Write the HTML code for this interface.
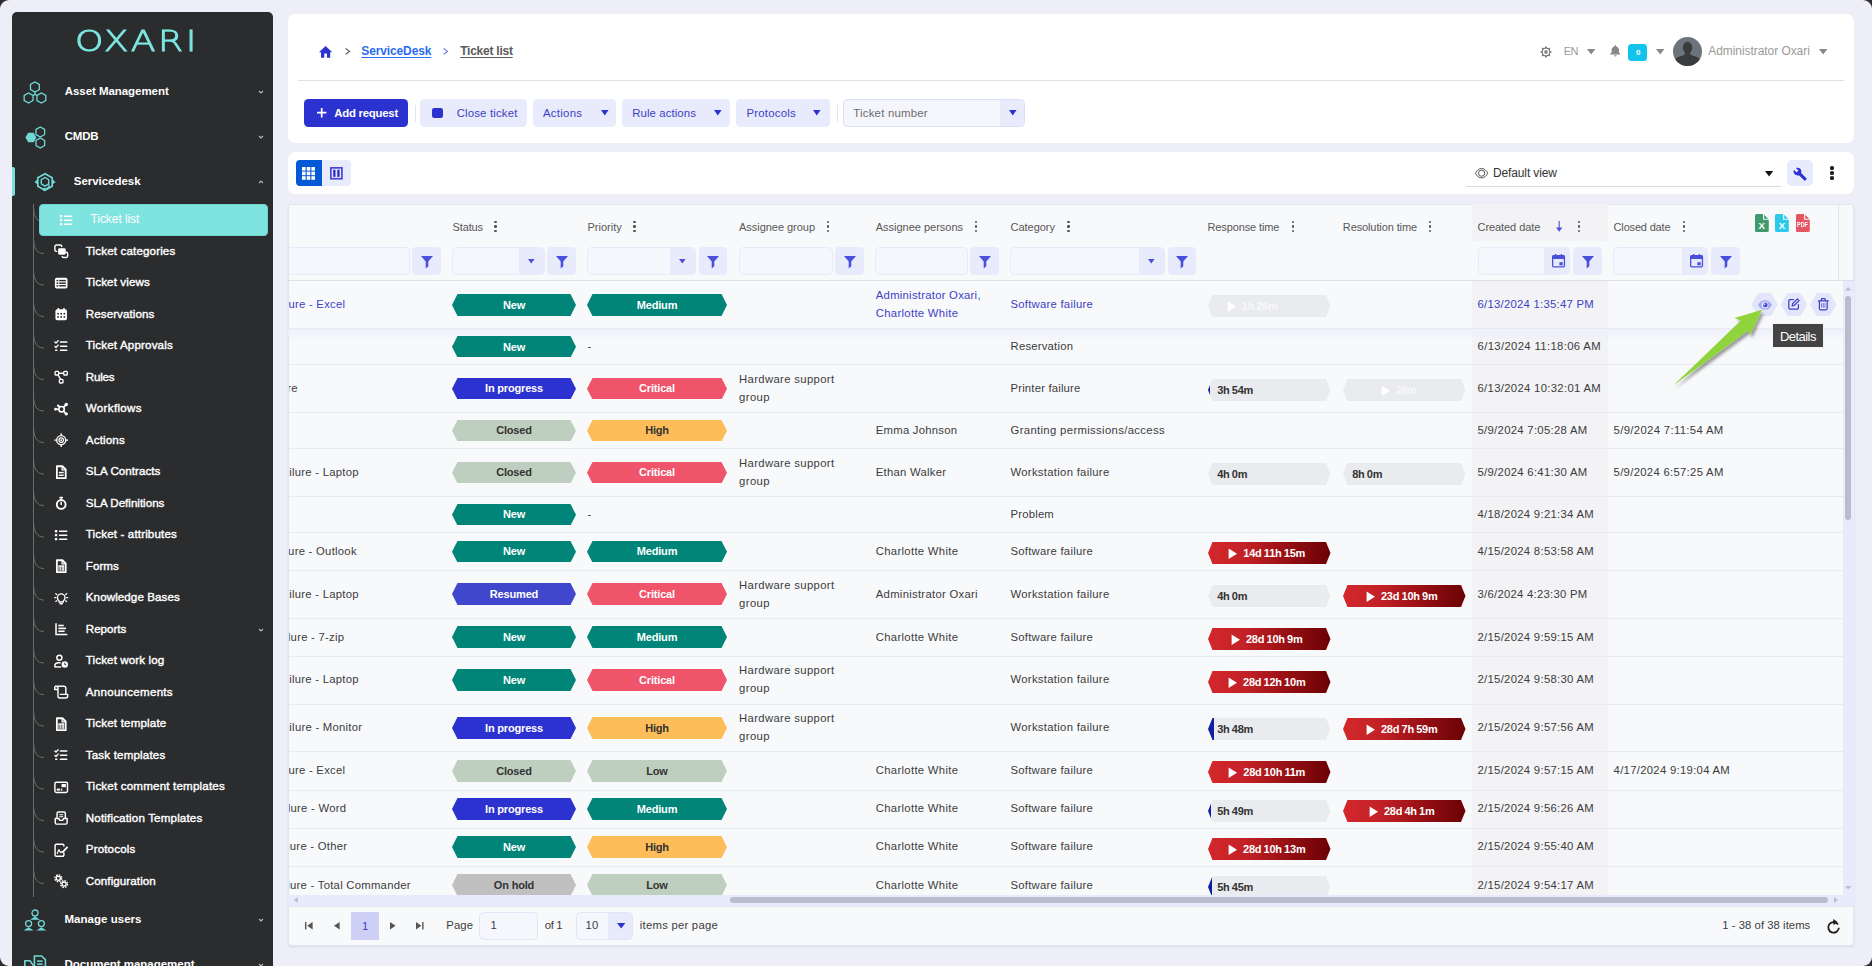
<!DOCTYPE html>
<html lang="en"><head><meta charset="utf-8"><title>Ticket list - OXARI ServiceDesk</title>
<style>
html,body{margin:0;padding:0;background:#2e2e2e;}
body{width:1872px;height:966px;overflow:hidden;font-family:"Liberation Sans",Arial,sans-serif;}
#app{position:relative;width:1872px;height:966px;overflow:hidden;background:#eeeef8;border-radius:9px;}
.a{position:absolute;box-sizing:border-box;}
.t{position:absolute;white-space:nowrap;margin:0;padding:0;}
svg{position:absolute;overflow:visible;}

.hx{position:absolute;clip-path:polygon(0 50%,5.5px 0,calc(100% - 5.5px) 0,100% 50%,calc(100% - 5.5px) 100%,5.5px 100%);text-align:center;font-weight:700;font-size:11px;letter-spacing:-.18px;white-space:nowrap;overflow:hidden;}
.hx4{letter-spacing:-.22px;word-spacing:-.6px;clip-path:polygon(0 50%,4.5px 0,calc(100% - 4.5px) 0,100% 50%,calc(100% - 4.5px) 100%,4.5px 100%);}
.hx b{position:absolute;left:0;right:0;top:0;bottom:0;font-weight:700;}
.ln{position:absolute;background:#e3e5ee;height:1px;}

</style></head><body><div id="app">
<div class="a" style="left:12.00px;top:12.00px;width:261.00px;height:960.00px;background:#2b2c2e;border-radius:5px 5px 0 0;"></div><span id="t1" class="t" style="top:22.90px;font-size:28.6px;line-height:36px;color:#7ce6e0;font-weight:200;left:75.00px;font-family:&quot;DejaVu Sans&quot;,&quot;DejaVu Sans Light&quot;,sans-serif;font-weight:200;-webkit-text-stroke:.85px #7ce6e0;letter-spacing:1.9px;transform:scaleX(1.268);transform-origin:0 50%;">OXARI</span><svg style="left:24.00px;top:80.50px;" width="22" height="22" viewBox="0 0 22 22"><g fill="none" stroke="#6fd8d4" stroke-width="1.3"><polygon points="15.32,8.55 10.90,11.10 6.48,8.55 6.48,3.45 10.90,0.90 15.32,3.45"/><polygon points="9.02,19.55 4.60,22.10 0.18,19.55 0.18,14.45 4.60,11.90 9.02,14.45"/><polygon points="21.82,19.55 17.40,22.10 12.98,19.55 12.98,14.45 17.40,11.90 21.82,14.45"/><path d="M10.9 11.1V13.4M10.9 13.4L9 14.5M10.9 13.4L13 14.5"/></g></svg><span id="t2" class="t" style="top:81.20px;font-size:11.5px;line-height:20px;color:#fff;font-weight:700;left:64.70px;letter-spacing:-0.051px;">Asset Management</span><svg style="left:258.50px;top:89.50px;" width="4" height="4" viewBox="0 0 4 4"><path d="M0 1L2 3L4 1" fill="none" stroke="#b8b8b8" stroke-width="1.1"/></svg><svg style="left:24.50px;top:125.50px;" width="22" height="22" viewBox="0 0 22 22"><polygon points="11.40,11.50 8.65,16.26 3.15,16.26 0.40,11.50 3.15,6.74 8.65,6.74" fill="#6fd8d4"/><g fill="none" stroke="#6fd8d4" stroke-width="1.3"><polygon points="19.63,8.50 15.30,11.00 10.97,8.50 10.97,3.50 15.30,1.00 19.63,3.50"/><polygon points="19.63,19.50 15.30,22.00 10.97,19.50 10.97,14.50 15.30,12.00 19.63,14.50"/></g></svg><span id="t3" class="t" style="top:126.20px;font-size:11.5px;line-height:20px;color:#fff;font-weight:700;left:64.70px;letter-spacing:-0.175px;">CMDB</span><svg style="left:258.50px;top:134.50px;" width="4" height="4" viewBox="0 0 4 4"><path d="M0 1L2 3L4 1" fill="none" stroke="#b8b8b8" stroke-width="1.1"/></svg><div class="a" style="left:12.00px;top:166.50px;width:3.20px;height:29.50px;background:#7be0dc;border-radius:0 2px 2px 0;"></div><svg style="left:33.50px;top:172.50px;" width="22" height="22" viewBox="0 0 22 22"><g fill="none" stroke="#6fd8d4"><polygon points="18.19,13.15 11.00,17.30 3.81,13.15 3.81,4.85 11.00,0.70 18.19,4.85" stroke-width="1.7"/><polygon points="14.72,10.95 11.00,13.10 7.28,10.95 7.28,6.65 11.00,4.50 14.72,6.65" stroke-width="1.4"/><path d="M15 11.6V14L11.6 16.2" stroke-width="1.4"/></g><g fill="#6fd8d4"><path d="M3.6 6.4V11.6L0.4 9Z"/><path d="M18.4 6.4V11.6L21.6 9Z"/><circle cx="10.4" cy="16.4" r="1.7"/></g></svg><span id="t4" class="t" style="top:171.20px;font-size:11.5px;line-height:20px;color:#fff;font-weight:700;left:73.80px;letter-spacing:-0.040px;">Servicedesk</span><svg style="left:258.50px;top:179.50px;" width="4" height="4" viewBox="0 0 4 4"><path d="M0 3L2 1L4 3" fill="none" stroke="#b8b8b8" stroke-width="1.1"/></svg><svg style="left:0.00px;top:0.00px;" width="280" height="966" viewBox="0 0 280 966"><g fill="none" stroke="#6c6c6c" stroke-width="1"><path d="M33.5 204V897"/><path d="M33.5 208.2Q34 222.1 44 222.1"/><path d="M33.5 239.8Q34 253.7 44 253.7"/><path d="M33.5 271.3Q34 285.2 44 285.2"/><path d="M33.5 302.8Q34 316.7 44 316.7"/><path d="M33.5 334.3Q34 348.2 44 348.2"/><path d="M33.5 365.8Q34 379.7 44 379.7"/><path d="M33.5 397.3Q34 411.2 44 411.2"/><path d="M33.5 428.8Q34 442.7 44 442.7"/><path d="M33.5 460.3Q34 474.2 44 474.2"/><path d="M33.5 491.8Q34 505.7 44 505.7"/><path d="M33.5 523.3Q34 537.2 44 537.2"/><path d="M33.5 554.8Q34 568.7 44 568.7"/><path d="M33.5 586.3Q34 600.2 44 600.2"/><path d="M33.5 617.8Q34 631.7 44 631.7"/><path d="M33.5 649.3Q34 663.2 44 663.2"/><path d="M33.5 680.8Q34 694.7 44 694.7"/><path d="M33.5 712.3Q34 726.2 44 726.2"/><path d="M33.5 743.8Q34 757.7 44 757.7"/><path d="M33.5 775.3Q34 789.2 44 789.2"/><path d="M33.5 806.8Q34 820.7 44 820.7"/><path d="M33.5 838.3Q34 852.2 44 852.2"/><path d="M33.5 869.8Q34 883.7 44 883.7"/></g></svg><div class="a" style="left:39.00px;top:203.70px;width:229.00px;height:32.50px;background:#7fe3e0;border-radius:4px;border:1px solid #6fd3cf;"></div><svg style="left:59.20px;top:213.30px;" width="14.4" height="14.4" viewBox="0 0 16 16"><g fill="#fff"><rect x="1" y="2.3" width="2.6" height="2.6" rx=".6"/><rect x="1" y="6.7" width="2.6" height="2.6" rx=".6"/><rect x="1" y="11.1" width="2.6" height="2.6" rx=".6"/><rect x="5.4" y="2.8" width="9.6" height="1.7" rx=".8"/><rect x="5.4" y="7.2" width="9.6" height="1.7" rx=".8"/><rect x="5.4" y="11.6" width="9.6" height="1.7" rx=".8"/></g></svg><span id="t5" class="t" style="top:209.10px;font-size:12px;line-height:20px;color:#fff;left:90.50px;letter-spacing:-0.069px;">Ticket list</span><svg style="left:54.30px;top:244.10px;" width="14.4" height="14.4" viewBox="0 0 16 16"><g fill="none" stroke="#fff" stroke-width="1.6"><path d="M3.6 8.2H2.6A1.6 1.6 0 0 1 1 6.6V2.8A1.6 1.6 0 0 1 2.6 1.2H7A1.6 1.6 0 0 1 8.6 2.8V3.4"/><path d="M12.6 9.2H13.6A1.6 1.6 0 0 1 15.2 10.8V13.4A1.6 1.6 0 0 1 13.6 15H10.6A1.6 1.6 0 0 1 9 13.4"/></g><rect x="4.6" y="4.6" width="8.4" height="7.4" rx="1.6" fill="#fff"/></svg><span id="t6" class="t" style="top:241.00px;font-size:11.6px;line-height:20px;color:#fff;left:85.80px;letter-spacing:0.141px;-webkit-text-stroke:.38px #fff;">Ticket categories</span><svg style="left:54.30px;top:275.60px;" width="14.4" height="14.4" viewBox="0 0 16 16"><rect x="1" y="2" width="14" height="12" rx="2" fill="#fff"/><g fill="#2b2c2e"><rect x="2.8" y="4.3" width="2" height="1.6"/><rect x="2.8" y="7.2" width="2" height="1.6"/><rect x="2.8" y="10.1" width="2" height="1.6"/><rect x="5.8" y="4.3" width="7.4" height="1.6"/><rect x="5.8" y="7.2" width="7.4" height="1.6"/><rect x="5.8" y="10.1" width="7.4" height="1.6"/></g></svg><span id="t7" class="t" style="top:272.00px;font-size:11.6px;line-height:20px;color:#fff;left:85.80px;letter-spacing:0.116px;-webkit-text-stroke:.38px #fff;">Ticket views</span><svg style="left:54.30px;top:307.10px;" width="14.4" height="14.4" viewBox="0 0 16 16"><rect x="1.6" y="2.6" width="12.8" height="12.2" rx="2" fill="#fff"/><rect x="4" y="1" width="1.8" height="3.4" rx=".8" fill="#fff"/><rect x="10.2" y="1" width="1.8" height="3.4" rx=".8" fill="#fff"/><g fill="#2b2c2e"><rect x="3.6" y="6.6" width="1.8" height="1.8"/><rect x="7.1" y="6.6" width="1.8" height="1.8"/><rect x="10.6" y="6.6" width="1.8" height="1.8"/><rect x="3.6" y="10.2" width="1.8" height="1.8"/><rect x="7.1" y="10.2" width="1.8" height="1.8"/><rect x="10.6" y="10.2" width="1.8" height="1.8"/></g></svg><span id="t8" class="t" style="top:304.00px;font-size:11.6px;line-height:20px;color:#fff;left:85.80px;letter-spacing:0.077px;-webkit-text-stroke:.38px #fff;">Reservations</span><svg style="left:54.30px;top:338.60px;" width="14.4" height="14.4" viewBox="0 0 16 16"><g fill="none" stroke="#fff" stroke-width="1.5" stroke-linecap="round" stroke-linejoin="round"><path d="M1 3.4l1.2 1.2L4.6 2"/><path d="M1 8.2l1.2 1.2L4.6 6.8"/></g><g fill="#fff"><rect x="1.2" y="11.6" width="2.6" height="1.8" rx=".6"/><rect x="6.4" y="2.6" width="8.6" height="1.7" rx=".8"/><rect x="6.4" y="7.2" width="8.6" height="1.7" rx=".8"/><rect x="6.4" y="11.7" width="8.6" height="1.7" rx=".8"/></g></svg><span id="t9" class="t" style="top:335.00px;font-size:11.6px;line-height:20px;color:#fff;left:85.80px;letter-spacing:0.154px;-webkit-text-stroke:.38px #fff;">Ticket Approvals</span><svg style="left:54.30px;top:370.10px;" width="14.4" height="14.4" viewBox="0 0 16 16"><g fill="none" stroke="#fff" stroke-width="1.5"><rect x="1.2" y="1.6" width="4" height="4" rx="1"/><rect x="10.8" y="1.6" width="4" height="4" rx="1"/><rect x="6" y="10.4" width="4" height="4" rx="1"/><path d="M5.2 3.6H10.8M4.4 5.4L7.4 10.4"/></g></svg><span id="t10" class="t" style="top:367.00px;font-size:11.6px;line-height:20px;color:#fff;left:85.80px;letter-spacing:-0.211px;-webkit-text-stroke:.38px #fff;">Rules</span><svg style="left:54.30px;top:401.60px;" width="14.4" height="14.4" viewBox="0 0 16 16"><g fill="none" stroke="#fff" stroke-width="1.8"><circle cx="8.4" cy="8" r="3"/><path d="M10.4 6L13 3.4M10.4 10L13 12.6M5.4 8H2.6M6.4 5.8L5 4.4"/></g><g fill="#fff"><circle cx="13.6" cy="2.8" r="1.9"/><circle cx="13.6" cy="13.2" r="1.9"/><circle cx="1.8" cy="8" r="1.6"/><circle cx="4.6" cy="4" r="1.3"/></g></svg><span id="t11" class="t" style="top:398.00px;font-size:11.6px;line-height:20px;color:#fff;left:85.80px;letter-spacing:0.315px;-webkit-text-stroke:.38px #fff;">Workflows</span><svg style="left:54.30px;top:433.10px;" width="14.4" height="14.4" viewBox="0 0 16 16"><g fill="none" stroke="#fff" stroke-width="1.5"><circle cx="8" cy="8" r="5"/><circle cx="8" cy="8" r="2.5" stroke-width="1.3"/><path d="M8 .4V3M8 13V15.6M.4 8H3M13 8H15.6"/></g><circle cx="8" cy="8" r="1" fill="#fff"/></svg><span id="t12" class="t" style="top:430.00px;font-size:11.6px;line-height:20px;color:#fff;left:85.80px;letter-spacing:0.153px;-webkit-text-stroke:.38px #fff;">Actions</span><svg style="left:54.30px;top:464.60px;" width="14.4" height="14.4" viewBox="0 0 16 16"><path d="M3.2 1.4H9.4L13 5V14.6H3.2Z" fill="none" stroke="#fff" stroke-width="2" stroke-linejoin="round"/><path d="M9 1.4V5.4H13" fill="none" stroke="#fff" stroke-width="1.4"/><g fill="#fff"><rect x="5.4" y="7.6" width="5.4" height="1.6"/><rect x="5.4" y="10.6" width="5.4" height="1.6"/></g></svg><span id="t13" class="t" style="top:461.00px;font-size:11.6px;line-height:20px;color:#fff;left:85.80px;letter-spacing:0.038px;-webkit-text-stroke:.38px #fff;">SLA Contracts</span><svg style="left:54.30px;top:496.10px;" width="14.4" height="14.4" viewBox="0 0 16 16"><circle cx="8" cy="9.4" r="4.9" fill="none" stroke="#fff" stroke-width="2.1"/><g fill="#fff"><rect x="6" y=".8" width="4" height="1.7" rx=".6"/><rect x="7.2" y="2" width="1.6" height="2.4"/><rect x="7.2" y="6.4" width="1.6" height="3.6" rx=".6"/></g></svg><span id="t14" class="t" style="top:493.00px;font-size:11.6px;line-height:20px;color:#fff;left:85.80px;letter-spacing:-0.003px;-webkit-text-stroke:.38px #fff;">SLA Definitions</span><svg style="left:54.30px;top:527.60px;" width="14.4" height="14.4" viewBox="0 0 16 16"><g fill="#fff"><rect x="1" y="2.3" width="2.6" height="2.6" rx=".6"/><rect x="1" y="6.7" width="2.6" height="2.6" rx=".6"/><rect x="1" y="11.1" width="2.6" height="2.6" rx=".6"/><rect x="5.4" y="2.8" width="9.6" height="1.7" rx=".8"/><rect x="5.4" y="7.2" width="9.6" height="1.7" rx=".8"/><rect x="5.4" y="11.6" width="9.6" height="1.7" rx=".8"/></g></svg><span id="t15" class="t" style="top:524.00px;font-size:11.6px;line-height:20px;color:#fff;left:85.80px;letter-spacing:0.138px;-webkit-text-stroke:.38px #fff;">Ticket - attributes</span><svg style="left:54.30px;top:559.10px;" width="14.4" height="14.4" viewBox="0 0 16 16"><path d="M3.2 1.4H9.4L13 5V14.6H3.2Z" fill="none" stroke="#fff" stroke-width="2" stroke-linejoin="round"/><path d="M9 1.4V5.4H13" fill="none" stroke="#fff" stroke-width="1.4"/><g fill="#fff"><rect x="5" y="7.2" width="6.2" height="1.3"/><rect x="5" y="7.2" width="1.1" height="6"/><rect x="6.9" y="7.2" width="1.1" height="6"/><rect x="8.6" y="7.2" width="1.1" height="6"/><rect x="10.2" y="7.2" width="1.1" height="6"/></g></svg><span id="t16" class="t" style="top:556.00px;font-size:11.6px;line-height:20px;color:#fff;left:85.80px;letter-spacing:0.048px;-webkit-text-stroke:.38px #fff;">Forms</span><svg style="left:54.30px;top:590.60px;" width="14.4" height="14.4" viewBox="0 0 16 16"><g fill="none" stroke="#fff" stroke-width="1.5" stroke-linecap="round"><path d="M5.6 10.8C4.4 10 3.8 8.8 3.8 7.4A4.2 4.2 0 0 1 12.2 7.4C12.2 8.8 11.6 10 10.4 10.8V12.2H5.6Z" stroke-linejoin="round"/><path d="M.8 7.4H2M14 7.4H15.2M2 3L3 3.8M14 3L13 3.8M2 11.6L3 10.9M14 11.6L13 10.9"/></g><rect x="6" y="13.4" width="4" height="1.7" rx=".8" fill="#fff"/></svg><span id="t17" class="t" style="top:587.00px;font-size:11.6px;line-height:20px;color:#fff;left:85.80px;letter-spacing:0.086px;-webkit-text-stroke:.38px #fff;">Knowledge Bases</span><svg style="left:54.30px;top:622.10px;" width="14.4" height="14.4" viewBox="0 0 16 16"><g fill="#fff"><path d="M1.4 1.4H3.1V13H14.8V14.7H1.4Z"/><rect x="4.8" y="3" width="6" height="1.8"/><rect x="4.8" y="6.2" width="8.6" height="1.8"/><rect x="4.8" y="9.4" width="7" height="1.8"/></g></svg><span id="t18" class="t" style="top:619.00px;font-size:11.6px;line-height:20px;color:#fff;left:85.80px;letter-spacing:-0.001px;-webkit-text-stroke:.38px #fff;">Reports</span><svg style="left:258.50px;top:627.80px;" width="4" height="4" viewBox="0 0 4 4"><path d="M0 1L2 3L4 1" fill="none" stroke="#b8b8b8" stroke-width="1.1"/></svg><svg style="left:54.30px;top:653.60px;" width="14.4" height="14.4" viewBox="0 0 16 16"><g fill="none" stroke="#fff" stroke-width="1.6"><circle cx="6" cy="4.2" r="2.8"/><path d="M.9 14.6V13.4C.9 11.2 2.8 9.8 5 9.8H7.4"/><path d="M.9 14.4H8"/></g><circle cx="12" cy="11.6" r="3.6" fill="#fff"/><path d="M12 9.6V11.8H13.6" fill="none" stroke="#2b2c2e" stroke-width="1"/></svg><span id="t19" class="t" style="top:650.00px;font-size:11.6px;line-height:20px;color:#fff;left:85.80px;letter-spacing:0.114px;-webkit-text-stroke:.38px #fff;">Ticket work log</span><svg style="left:54.30px;top:685.10px;" width="14.4" height="14.4" viewBox="0 0 16 16"><g fill="none" stroke="#fff" stroke-width="1.6" stroke-linejoin="round"><path d="M4.4 10.4V3.6A2.2 2.2 0 0 0 2.2 1.4H11A2.2 2.2 0 0 1 13.2 3.6V10"/><path d="M2.2 1.4A1.6 1.6 0 0 0 .8 3.2V5H4.2"/><path d="M6.4 10.4H15.2V12.2A2.2 2.2 0 0 1 13 14.4H6.6A2.2 2.2 0 0 1 4.4 12.2V10.4"/></g></svg><span id="t20" class="t" style="top:682.00px;font-size:11.6px;line-height:20px;color:#fff;left:85.80px;letter-spacing:0.254px;-webkit-text-stroke:.38px #fff;">Announcements</span><svg style="left:54.30px;top:716.60px;" width="14.4" height="14.4" viewBox="0 0 16 16"><path d="M3.2 1.4H9.4L13 5V14.6H3.2Z" fill="none" stroke="#fff" stroke-width="2" stroke-linejoin="round"/><path d="M9 1.4V5.4H13" fill="none" stroke="#fff" stroke-width="1.4"/><g fill="#fff"><rect x="5" y="7.2" width="6.2" height="1.3"/><rect x="5" y="7.2" width="1.1" height="6"/><rect x="6.9" y="7.2" width="1.1" height="6"/><rect x="8.6" y="7.2" width="1.1" height="6"/><rect x="10.2" y="7.2" width="1.1" height="6"/></g></svg><span id="t21" class="t" style="top:713.00px;font-size:11.6px;line-height:20px;color:#fff;left:85.80px;letter-spacing:0.161px;-webkit-text-stroke:.38px #fff;">Ticket template</span><svg style="left:54.30px;top:748.10px;" width="14.4" height="14.4" viewBox="0 0 16 16"><g fill="none" stroke="#fff" stroke-width="1.5" stroke-linecap="round" stroke-linejoin="round"><path d="M1 3.4l1.2 1.2L4.6 2"/><path d="M1 8.2l1.2 1.2L4.6 6.8"/></g><g fill="#fff"><rect x="1.2" y="11.6" width="2.6" height="1.8" rx=".6"/><rect x="6.4" y="2.6" width="8.6" height="1.7" rx=".8"/><rect x="6.4" y="7.2" width="8.6" height="1.7" rx=".8"/><rect x="6.4" y="11.7" width="8.6" height="1.7" rx=".8"/></g></svg><span id="t22" class="t" style="top:745.00px;font-size:11.6px;line-height:20px;color:#fff;left:85.80px;letter-spacing:0.162px;-webkit-text-stroke:.38px #fff;">Task templates</span><svg style="left:54.30px;top:779.60px;" width="14.4" height="14.4" viewBox="0 0 16 16"><rect x="1" y="2.4" width="14" height="11.4" rx="1.6" fill="none" stroke="#fff" stroke-width="1.6"/><g fill="#fff"><rect x="8.4" y="4.4" width="4.8" height="3.6"/><rect x="3" y="9.6" width="3.6" height="2.2"/><rect x="7.6" y="9.6" width="1.6" height="2.2"/></g></svg><span id="t23" class="t" style="top:776.00px;font-size:11.6px;line-height:20px;color:#fff;left:85.80px;letter-spacing:0.176px;-webkit-text-stroke:.38px #fff;">Ticket comment templates</span><svg style="left:54.30px;top:811.10px;" width="14.4" height="14.4" viewBox="0 0 16 16"><g fill="none" stroke="#fff" stroke-width="1.6" stroke-linejoin="round"><path d="M3.4 8.2V2.6A1.4 1.4 0 0 1 4.8 1.2H11.2A1.4 1.4 0 0 1 12.6 2.6V8.2"/><path d="M1.4 8.4H5.4L6.4 10.4H9.6L10.6 8.4H14.6V13.2A1.4 1.4 0 0 1 13.2 14.6H2.8A1.4 1.4 0 0 1 1.4 13.2Z"/><path d="M5.8 4.2H10.2M5.8 6.4H10.2" stroke-width="1.2"/></g></svg><span id="t24" class="t" style="top:808.00px;font-size:11.6px;line-height:20px;color:#fff;left:85.80px;letter-spacing:0.154px;-webkit-text-stroke:.38px #fff;">Notification Templates</span><svg style="left:54.30px;top:842.60px;" width="14.4" height="14.4" viewBox="0 0 16 16"><g fill="none" stroke="#fff" stroke-width="1.6" stroke-linejoin="round" stroke-linecap="round"><path d="M11 11V13.4A1.4 1.4 0 0 1 9.6 14.8H2.6A1.4 1.4 0 0 1 1.2 13.4V2.8A1.4 1.4 0 0 1 2.6 1.4H9.6A1.4 1.4 0 0 1 11 2.8V3.4"/><path d="M3.6 11.6L5.4 7.4L7.2 10.6L9 9.4" stroke-width="1.3"/></g><path d="M14.4 3.6L15.8 5L10.4 10.8L8.4 11.4L9 9.4Z" fill="#fff"/></svg><span id="t25" class="t" style="top:839.00px;font-size:11.6px;line-height:20px;color:#fff;left:85.80px;letter-spacing:0.141px;-webkit-text-stroke:.38px #fff;">Protocols</span><svg style="left:54.30px;top:874.10px;" width="14.4" height="14.4" viewBox="0 0 16 16"><g fill="none" stroke="#fff"><circle cx="4.8" cy="4.8" r="2.3" stroke-width="1.5"/><circle cx="4.8" cy="4.8" r="3.8" stroke-width="1.5" stroke-dasharray="1.7 1.28"/><circle cx="11.2" cy="11.2" r="2.3" stroke-width="1.5"/><circle cx="11.2" cy="11.2" r="3.8" stroke-width="1.5" stroke-dasharray="1.7 1.28"/></g></svg><span id="t26" class="t" style="top:871.00px;font-size:11.6px;line-height:20px;color:#fff;left:85.80px;letter-spacing:0.087px;-webkit-text-stroke:.38px #fff;">Configuration</span><svg style="left:24.00px;top:909.00px;" width="22" height="22" viewBox="0 0 22 22"><g fill="none" stroke="#6fd8d4" stroke-width="1.3"><circle cx="11" cy="4" r="3"/><circle cx="4.6" cy="14.6" r="3"/><circle cx="17.4" cy="14.6" r="3"/></g><g fill="#6fd8d4"><path d="M6 10.8L11 7.6L16 10.8Z"/><path d="M-.4 21.6L4.6 18.2L9.6 21.6Z"/><path d="M12.4 21.6L17.4 18.2L22.4 21.6Z"/></g></svg><span id="t27" class="t" style="top:909.20px;font-size:11.5px;line-height:20px;color:#fff;font-weight:700;left:64.50px;letter-spacing:0.025px;">Manage users</span><svg style="left:258.50px;top:917.50px;" width="4" height="4" viewBox="0 0 4 4"><path d="M0 1L2 3L4 1" fill="none" stroke="#b8b8b8" stroke-width="1.1"/></svg><svg style="left:24.00px;top:954.50px;" width="22" height="22" viewBox="0 0 22 22"><g fill="none" stroke="#6fd8d4" stroke-width="1.6" stroke-linejoin="round"><path d="M10.4 12V1H17.6L21.4 4.6V22H10.4"/><path d="M.8 22V5.8H6L10 11.4V22"/></g><g fill="#6fd8d4"><rect x="13" y="5.4" width="5.6" height="1.5"/><rect x="13" y="8.4" width="5.6" height="1.5"/></g></svg><span id="t28" class="t" style="top:954.20px;font-size:11.5px;line-height:20px;color:#fff;font-weight:700;left:64.50px;letter-spacing:-0.019px;">Document management</span><svg style="left:258.50px;top:962.50px;" width="4" height="4" viewBox="0 0 4 4"><path d="M0 1L2 3L4 1" fill="none" stroke="#b8b8b8" stroke-width="1.1"/></svg><div class="a" style="left:288.00px;top:14.00px;width:1566.00px;height:128.50px;background:#fff;border-radius:7px;"></div><svg style="left:318.70px;top:45.90px;" width="13.2" height="11.8" viewBox="0 0 13.2 11.8"><path d="M5.3 11.8V7.6H7.9V11.8H11.2V6.2H13.2L6.6 0L0 6.2H2V11.8Z" fill="#2b32d0"/></svg><svg style="left:344.70px;top:48.20px;" width="5.4" height="6.8" viewBox="0 0 5.4 6.8"><path d="M.6 .5L4.6 3.4L.6 6.3" fill="none" stroke="#555" stroke-width="1.05"/></svg><span id="t29" class="t" style="top:41.00px;font-size:12px;line-height:20px;color:#2a6cf2;font-weight:700;left:361.30px;letter-spacing:-0.126px;text-decoration:underline;text-underline-offset:1.5px;">ServiceDesk</span><svg style="left:443.20px;top:48.20px;" width="5.4" height="6.8" viewBox="0 0 5.4 6.8"><path d="M.6 .5L4.6 3.4L.6 6.3" fill="none" stroke="#6a74e6" stroke-width="1.05"/></svg><span id="t30" class="t" style="top:41.00px;font-size:12px;line-height:20px;color:#5a5a5a;font-weight:700;left:460.20px;letter-spacing:-0.240px;text-decoration:underline;text-underline-offset:1.5px;">Ticket list</span><div class="a" style="left:298.00px;top:80.00px;width:1546.00px;height:1.00px;background:#dfe1ea;"></div><svg style="left:1540.00px;top:45.60px;" width="12" height="12" viewBox="0 0 12 12"><polygon points="6.00,0.05 7.61,2.12 10.21,1.79 9.88,4.39 11.95,6.00 9.88,7.61 10.21,10.21 7.61,9.88 6.00,11.95 4.39,9.88 1.79,10.21 2.12,7.61 0.05,6.00 2.12,4.39 1.79,1.79 4.39,2.12" fill="#7b7b7b"/><circle cx="6" cy="6" r="3.2" fill="#fff"/><circle cx="6" cy="6" r="1.9" fill="#8a8a8a"/></svg><span id="t31" class="t" style="top:40.50px;font-size:11px;line-height:20px;color:#9a9a9a;left:1563.70px;letter-spacing:-0.441px;">EN</span><svg style="left:1587.00px;top:49.20px;" width="8.4" height="5.6" viewBox="0 0 8.4 5.6"><path d="M0 0H8.4L4.2 5.6Z" fill="#888"/></svg><svg style="left:1609.80px;top:45.10px;" width="10.6" height="11.8" viewBox="0 0 11.4 12"><path d="M5.7 0C6.3 0 6.7 .4 6.7 1V1.3C8.6 1.8 9.7 3.4 9.7 5.4V7.6L11.2 9.4V10H.2V9.4L1.7 7.6V5.4C1.7 3.4 2.8 1.8 4.7 1.3V1C4.7 .4 5.1 0 5.7 0ZM4.4 10.7H7A1.3 1.3 0 0 1 4.4 10.7Z" fill="#888"/></svg><div class="a" style="left:1628.00px;top:44.00px;width:19.00px;height:17.00px;background:#12c4ec;border-radius:3.5px;"></div><span id="t32" class="t" style="top:43.00px;font-size:8px;line-height:20px;color:#fff;font-weight:700;left:1636.10px;">0</span><svg style="left:1656.00px;top:49.20px;" width="8.4" height="5.6" viewBox="0 0 8.4 5.6"><path d="M0 0H8.4L4.2 5.6Z" fill="#888"/></svg><div class="a" style="left:1672.80px;top:36.80px;width:29.30px;height:29.30px;background:#6b737c;border-radius:15px;overflow:hidden;"><svg style="left:0.00px;top:0.00px;" width="29.3" height="29.3" viewBox="0 0 29.3 29.3"><g fill="#3a3b3c"><ellipse cx="14.6" cy="10.6" rx="4.7" ry="5.9"/><path d="M11.8 14H17.4V17.8C20.8 19 25 20 26.6 21.8V30H2.6V21.8C4.2 20 8.4 19 11.8 17.8Z"/></g></svg></div><span id="t33" class="t" style="top:41.20px;font-size:12px;line-height:20px;color:#9a9a9a;left:1708.20px;letter-spacing:-0.058px;">Administrator Oxari</span><svg style="left:1819.00px;top:49.20px;" width="8.4" height="5.6" viewBox="0 0 8.4 5.6"><path d="M0 0H8.4L4.2 5.6Z" fill="#888"/></svg><div class="a" style="left:304.00px;top:99.00px;width:104.00px;height:28.00px;background:#2b32d0;border-radius:4.5px;"></div><svg style="left:316.80px;top:108.00px;" width="9.4" height="9.4" viewBox="0 0 9.4 9.4"><path d="M4.7 0V9.4M0 4.7H9.4" stroke="#fff" stroke-width="1.7"/></svg><span id="t34" class="t" style="top:103.00px;font-size:11.4px;line-height:20px;color:#fff;font-weight:700;left:334.30px;letter-spacing:-0.250px;">Add request</span><div class="a" style="left:414.50px;top:105.00px;width:1.00px;height:17.00px;background:#e4e5ee;"></div><div class="a" style="left:420.00px;top:99.00px;width:106.70px;height:28.00px;background:#e8ebfc;border-radius:4.5px;"></div><div class="a" style="left:432.00px;top:107.70px;width:10.70px;height:10.30px;background:#2b32d0;border-radius:2.2px;"></div><span id="t35" class="t" style="top:103.00px;font-size:11.4px;line-height:20px;color:#3d41c6;left:456.70px;letter-spacing:0.160px;">Close ticket</span><div class="a" style="left:533.00px;top:99.00px;width:83.00px;height:28.00px;background:#e8ebfc;border-radius:4.5px;"></div><span id="t36" class="t" style="top:103.00px;font-size:11.4px;line-height:20px;color:#3d41c6;left:543.00px;letter-spacing:0.263px;">Actions</span><svg style="left:600.50px;top:110.30px;" width="7.6" height="5.4" viewBox="0 0 7.6 5.4"><path d="M0 0H7.6L3.8 5.4Z" fill="#2b32d0"/></svg><div class="a" style="left:622.00px;top:99.00px;width:107.70px;height:28.00px;background:#e8ebfc;border-radius:4.5px;"></div><span id="t37" class="t" style="top:103.00px;font-size:11.4px;line-height:20px;color:#3d41c6;left:632.20px;letter-spacing:0.093px;">Rule actions</span><svg style="left:714.20px;top:110.30px;" width="7.6" height="5.4" viewBox="0 0 7.6 5.4"><path d="M0 0H7.6L3.8 5.4Z" fill="#2b32d0"/></svg><div class="a" style="left:736.00px;top:99.00px;width:93.70px;height:28.00px;background:#e8ebfc;border-radius:4.5px;"></div><span id="t38" class="t" style="top:103.00px;font-size:11.4px;line-height:20px;color:#3d41c6;left:746.40px;letter-spacing:0.235px;">Protocols</span><svg style="left:813.00px;top:110.30px;" width="7.6" height="5.4" viewBox="0 0 7.6 5.4"><path d="M0 0H7.6L3.8 5.4Z" fill="#2b32d0"/></svg><div class="a" style="left:836.50px;top:105.00px;width:1.00px;height:17.00px;background:#e4e5ee;"></div><div class="a" style="left:843.00px;top:99.00px;width:182.00px;height:28.00px;background:#f5f6fc;border-radius:4.5px;border:1px solid #dcdff6;overflow:hidden;"><div class="a" style="left:155.70px;top:-1.00px;width:26.00px;height:28.00px;background:#e8ebfc;"></div></div><span id="t39" class="t" style="top:103.00px;font-size:11.4px;line-height:20px;color:#6c6c6c;left:853.30px;letter-spacing:0.212px;">Ticket number</span><svg style="left:1009.40px;top:110.30px;" width="7.6" height="5.4" viewBox="0 0 7.6 5.4"><path d="M0 0H7.6L3.8 5.4Z" fill="#2b32d0"/></svg><div class="a" style="left:288.00px;top:152.00px;width:1566.00px;height:42.00px;background:#fff;border-radius:7px;"></div><div class="a" style="left:295.80px;top:159.80px;width:54.80px;height:26.40px;background:#e8ebfc;border-radius:4px;overflow:hidden;"><div class="a" style="left:0.00px;top:0.00px;width:26.30px;height:26.40px;background:#0558d6;"></div></div><svg style="left:302.00px;top:167.00px;" width="13" height="12.8" viewBox="0 0 13 12.8"><g fill="#fff"><rect x="0" y="0" width="3.6" height="3.6"/><rect x="0" y="4.6" width="3.6" height="3.6"/><rect x="0" y="9.2" width="3.6" height="3.6"/><rect x="4.7" y="0" width="3.6" height="3.6"/><rect x="4.7" y="4.6" width="3.6" height="3.6"/><rect x="4.7" y="9.2" width="3.6" height="3.6"/><rect x="9.4" y="0" width="3.6" height="3.6"/><rect x="9.4" y="4.6" width="3.6" height="3.6"/><rect x="9.4" y="9.2" width="3.6" height="3.6"/></g></svg><svg style="left:330.20px;top:167.20px;" width="12.8" height="12.6" viewBox="0 0 12.8 12.6"><rect x=".85" y=".85" width="11.1" height="10.9" fill="none" stroke="#4a46d4" stroke-width="1.7"/><rect x="3.2" y="2.7" width="2.3" height="7.2" fill="#2a2ccc"/><rect x="7.3" y="2.7" width="2.3" height="7.2" fill="#2a2ccc"/></svg><div class="a" style="left:1466.00px;top:186.30px;width:315.00px;height:1.00px;background:#d8dbe6;"></div><svg style="left:1474.80px;top:167.80px;" width="13.2" height="10.4" viewBox="0 0 13.2 10.4"><g fill="none" stroke="#444" stroke-width=".9"><path d="M.5 5.2C1.8 2.2 4 .5 6.6 .5S11.4 2.2 12.7 5.2C11.4 8.2 9.2 9.9 6.6 9.9S1.8 8.2 .5 5.2Z"/><circle cx="6.6" cy="5.2" r="3.1"/></g></svg><span id="t40" class="t" style="top:163.00px;font-size:12px;line-height:20px;color:#333;left:1492.90px;letter-spacing:-0.115px;">Default view</span><svg style="left:1765.00px;top:170.60px;" width="8.2" height="5.6" viewBox="0 0 8.2 5.6"><path d="M0 0H8.2L4.1 5.6Z" fill="#111"/></svg><div class="a" style="left:1787.00px;top:160.20px;width:26.00px;height:26.00px;background:#e8ebfc;border-radius:5px;"></div><svg style="left:1792.90px;top:166.60px;" width="14.4" height="14.4" viewBox="0 0 24 24"><path d="M22.7 19l-9.1-9.1c.9-2.3.4-5-1.5-6.9-2-2-5-2.4-7.4-1.3L9 6 6 9 1.6 4.7C.4 7.1.9 10.1 2.9 12.1c1.9 1.9 4.6 2.4 6.9 1.5l9.1 9.1c.4.4 1 .4 1.4 0l2.3-2.3c.5-.4.5-1.1.1-1.4z" fill="#2b32d0"/></svg><div class="a" style="left:1830.40px;top:166.40px;width:3.20px;height:3.20px;background:#222;border-radius:1.6px;"></div><div class="a" style="left:1830.40px;top:171.40px;width:3.20px;height:3.20px;background:#222;border-radius:1.6px;"></div><div class="a" style="left:1830.40px;top:176.40px;width:3.20px;height:3.20px;background:#222;border-radius:1.6px;"></div><div class="a" style="left:288.00px;top:203.50px;width:1566.00px;height:742.50px;background:#f8f9fb;border-radius:3px;border:1px solid #e2e5ea;box-shadow:0 1px 2px rgba(120,125,160,.18);"></div><div class="a" style="left:1472.00px;top:204.00px;width:136.00px;height:37.00px;background:#f3f3f6;"></div><div class="a" style="left:1472.00px;top:281.00px;width:136.00px;height:614.00px;background:#f3f3f6;"></div><span id="t41" class="t" style="top:217.00px;font-size:11px;line-height:20px;color:#575757;left:452.50px;letter-spacing:-0.115px;">Status</span><div class="a" style="left:494.40px;top:220.70px;width:2.30px;height:2.30px;background:#555;border-radius:1.2px;"></div><div class="a" style="left:494.40px;top:225.30px;width:2.30px;height:2.30px;background:#555;border-radius:1.2px;"></div><div class="a" style="left:494.40px;top:229.90px;width:2.30px;height:2.30px;background:#555;border-radius:1.2px;"></div><span id="t42" class="t" style="top:217.00px;font-size:11px;line-height:20px;color:#575757;left:587.50px;letter-spacing:0.008px;">Priority</span><div class="a" style="left:633.40px;top:220.70px;width:2.30px;height:2.30px;background:#555;border-radius:1.2px;"></div><div class="a" style="left:633.40px;top:225.30px;width:2.30px;height:2.30px;background:#555;border-radius:1.2px;"></div><div class="a" style="left:633.40px;top:229.90px;width:2.30px;height:2.30px;background:#555;border-radius:1.2px;"></div><span id="t43" class="t" style="top:217.00px;font-size:11px;line-height:20px;color:#575757;left:739.00px;letter-spacing:-0.032px;">Assignee group</span><div class="a" style="left:826.70px;top:220.70px;width:2.30px;height:2.30px;background:#555;border-radius:1.2px;"></div><div class="a" style="left:826.70px;top:225.30px;width:2.30px;height:2.30px;background:#555;border-radius:1.2px;"></div><div class="a" style="left:826.70px;top:229.90px;width:2.30px;height:2.30px;background:#555;border-radius:1.2px;"></div><span id="t44" class="t" style="top:217.00px;font-size:11px;line-height:20px;color:#575757;left:875.80px;letter-spacing:-0.016px;">Assignee persons</span><div class="a" style="left:974.70px;top:220.70px;width:2.30px;height:2.30px;background:#555;border-radius:1.2px;"></div><div class="a" style="left:974.70px;top:225.30px;width:2.30px;height:2.30px;background:#555;border-radius:1.2px;"></div><div class="a" style="left:974.70px;top:229.90px;width:2.30px;height:2.30px;background:#555;border-radius:1.2px;"></div><span id="t45" class="t" style="top:217.00px;font-size:11px;line-height:20px;color:#575757;left:1010.50px;letter-spacing:-0.018px;">Category</span><div class="a" style="left:1067.40px;top:220.70px;width:2.30px;height:2.30px;background:#555;border-radius:1.2px;"></div><div class="a" style="left:1067.40px;top:225.30px;width:2.30px;height:2.30px;background:#555;border-radius:1.2px;"></div><div class="a" style="left:1067.40px;top:229.90px;width:2.30px;height:2.30px;background:#555;border-radius:1.2px;"></div><span id="t46" class="t" style="top:217.00px;font-size:11px;line-height:20px;color:#575757;left:1207.50px;letter-spacing:-0.121px;">Response time</span><div class="a" style="left:1291.70px;top:220.70px;width:2.30px;height:2.30px;background:#555;border-radius:1.2px;"></div><div class="a" style="left:1291.70px;top:225.30px;width:2.30px;height:2.30px;background:#555;border-radius:1.2px;"></div><div class="a" style="left:1291.70px;top:229.90px;width:2.30px;height:2.30px;background:#555;border-radius:1.2px;"></div><span id="t47" class="t" style="top:217.00px;font-size:11px;line-height:20px;color:#575757;left:1342.80px;letter-spacing:-0.109px;">Resolution time</span><div class="a" style="left:1428.70px;top:220.70px;width:2.30px;height:2.30px;background:#555;border-radius:1.2px;"></div><div class="a" style="left:1428.70px;top:225.30px;width:2.30px;height:2.30px;background:#555;border-radius:1.2px;"></div><div class="a" style="left:1428.70px;top:229.90px;width:2.30px;height:2.30px;background:#555;border-radius:1.2px;"></div><span id="t48" class="t" style="top:217.00px;font-size:11px;line-height:20px;color:#575757;left:1477.50px;letter-spacing:-0.067px;">Created date</span><div class="a" style="left:1577.50px;top:220.70px;width:2.30px;height:2.30px;background:#555;border-radius:1.2px;"></div><div class="a" style="left:1577.50px;top:225.30px;width:2.30px;height:2.30px;background:#555;border-radius:1.2px;"></div><div class="a" style="left:1577.50px;top:229.90px;width:2.30px;height:2.30px;background:#555;border-radius:1.2px;"></div><span id="t49" class="t" style="top:217.00px;font-size:11px;line-height:20px;color:#575757;left:1613.60px;letter-spacing:-0.174px;">Closed date</span><div class="a" style="left:1682.50px;top:220.70px;width:2.30px;height:2.30px;background:#555;border-radius:1.2px;"></div><div class="a" style="left:1682.50px;top:225.30px;width:2.30px;height:2.30px;background:#555;border-radius:1.2px;"></div><div class="a" style="left:1682.50px;top:229.90px;width:2.30px;height:2.30px;background:#555;border-radius:1.2px;"></div><svg style="left:1555.50px;top:221.20px;" width="6.4" height="10.8" viewBox="0 0 6.4 10.8"><path d="M3.2 0V8" fill="none" stroke="#4a50da" stroke-width="1.1"/><path d="M0 6.6H6.4L3.2 10.8Z" fill="#4a50da"/></svg><svg style="left:1754.70px;top:214.00px;" width="13.8" height="18" viewBox="0 0 13.8 18"><path d="M1.5 0H8.4L13.8 5.4V16.5A1.5 1.5 0 0 1 12.3 18H1.5A1.5 1.5 0 0 1 0 16.5V1.5A1.5 1.5 0 0 1 1.5 0Z" fill="#3f9b6e"/><path d="M8.6 -.2V5.2H14" fill="none" stroke="#f8f9fa" stroke-width="1.1"/></svg><span id="t50" class="t" style="top:216.40px;font-size:9.6px;line-height:20px;color:#fff;font-weight:700;left:1758.40px;">X</span><svg style="left:1775.10px;top:214.00px;" width="13.8" height="18" viewBox="0 0 13.8 18"><path d="M1.5 0H8.4L13.8 5.4V16.5A1.5 1.5 0 0 1 12.3 18H1.5A1.5 1.5 0 0 1 0 16.5V1.5A1.5 1.5 0 0 1 1.5 0Z" fill="#2cc9ea"/><path d="M8.6 -.2V5.2H14" fill="none" stroke="#f8f9fa" stroke-width="1.1"/></svg><span id="t51" class="t" style="top:216.40px;font-size:9.6px;line-height:20px;color:#fff;font-weight:700;left:1778.80px;">X</span><svg style="left:1795.90px;top:214.00px;" width="13.8" height="18" viewBox="0 0 13.8 18"><path d="M1.5 0H8.4L13.8 5.4V16.5A1.5 1.5 0 0 1 12.3 18H1.5A1.5 1.5 0 0 1 0 16.5V1.5A1.5 1.5 0 0 1 1.5 0Z" fill="#e45663"/><path d="M8.6 -.2V5.2H14" fill="none" stroke="#f8f9fa" stroke-width="1.1"/></svg><span id="t52" class="t" style="top:215.10px;font-size:8px;line-height:20px;color:#fff;font-weight:700;left:1797.40px;transform:scaleX(.68);transform-origin:0 50%;">PDF</span><div class="a" style="left:1838.30px;top:204.00px;width:1.00px;height:76.50px;background:#e2e5eb;"></div><div class="a" style="left:289.00px;top:247.00px;width:120.50px;height:27.50px;background:#f6f7fd;border:1px solid #e8eaf9;border-left:0;border-radius:0 4.5px 4.5px 0;"></div><div class="a" style="left:412.00px;top:247.00px;width:28.80px;height:27.50px;background:#e8ebfc;border-radius:4px;"></div><svg style="left:420.80px;top:255.60px;" width="12" height="12.4" viewBox="0 0 12 12.4"><path d="M0 0H12L7.3 5.6V10.2L4.7 12.4V5.6Z" fill="#4a50da"/></svg><div class="a" style="left:452.00px;top:247.00px;width:93.00px;height:27.50px;background:#f6f7fd;border-radius:4.5px;border:1px solid #e8eaf9;overflow:hidden;"><div class="a" style="left:66.00px;top:-1.00px;width:27.00px;height:28.00px;background:#e8ebfc;"></div></div><svg style="left:528.40px;top:258.50px;" width="6.6" height="4.6" viewBox="0 0 6.6 4.6"><path d="M0 0H6.6L3.3 4.6Z" fill="#4a50da"/></svg><div class="a" style="left:547.00px;top:247.00px;width:28.80px;height:27.50px;background:#e8ebfc;border-radius:4px;"></div><svg style="left:555.80px;top:255.60px;" width="12" height="12.4" viewBox="0 0 12 12.4"><path d="M0 0H12L7.3 5.6V10.2L4.7 12.4V5.6Z" fill="#4a50da"/></svg><div class="a" style="left:587.00px;top:247.00px;width:109.00px;height:27.50px;background:#f6f7fd;border-radius:4.5px;border:1px solid #e8eaf9;overflow:hidden;"><div class="a" style="left:82.00px;top:-1.00px;width:27.00px;height:28.00px;background:#e8ebfc;"></div></div><svg style="left:679.40px;top:258.50px;" width="6.6" height="4.6" viewBox="0 0 6.6 4.6"><path d="M0 0H6.6L3.3 4.6Z" fill="#4a50da"/></svg><div class="a" style="left:698.60px;top:247.00px;width:28.80px;height:27.50px;background:#e8ebfc;border-radius:4px;"></div><svg style="left:707.40px;top:255.60px;" width="12" height="12.4" viewBox="0 0 12 12.4"><path d="M0 0H12L7.3 5.6V10.2L4.7 12.4V5.6Z" fill="#4a50da"/></svg><div class="a" style="left:739.20px;top:247.00px;width:93.40px;height:27.50px;background:#f6f7fd;border-radius:4.5px;border:1px solid #e8eaf9;overflow:hidden;"></div><div class="a" style="left:835.00px;top:247.00px;width:28.80px;height:27.50px;background:#e8ebfc;border-radius:4px;"></div><svg style="left:843.80px;top:255.60px;" width="12" height="12.4" viewBox="0 0 12 12.4"><path d="M0 0H12L7.3 5.6V10.2L4.7 12.4V5.6Z" fill="#4a50da"/></svg><div class="a" style="left:875.20px;top:247.00px;width:92.40px;height:27.50px;background:#f6f7fd;border-radius:4.5px;border:1px solid #e8eaf9;overflow:hidden;"></div><div class="a" style="left:970.00px;top:247.00px;width:28.80px;height:27.50px;background:#e8ebfc;border-radius:4px;"></div><svg style="left:978.80px;top:255.60px;" width="12" height="12.4" viewBox="0 0 12 12.4"><path d="M0 0H12L7.3 5.6V10.2L4.7 12.4V5.6Z" fill="#4a50da"/></svg><div class="a" style="left:1010.20px;top:247.00px;width:154.60px;height:27.50px;background:#f6f7fd;border-radius:4.5px;border:1px solid #e8eaf9;overflow:hidden;"><div class="a" style="left:127.60px;top:-1.00px;width:27.00px;height:28.00px;background:#e8ebfc;"></div></div><svg style="left:1148.20px;top:258.50px;" width="6.6" height="4.6" viewBox="0 0 6.6 4.6"><path d="M0 0H6.6L3.3 4.6Z" fill="#4a50da"/></svg><div class="a" style="left:1167.60px;top:247.00px;width:28.80px;height:27.50px;background:#e8ebfc;border-radius:4px;"></div><svg style="left:1176.40px;top:255.60px;" width="12" height="12.4" viewBox="0 0 12 12.4"><path d="M0 0H12L7.3 5.6V10.2L4.7 12.4V5.6Z" fill="#4a50da"/></svg><div class="a" style="left:1478.00px;top:247.00px;width:92.00px;height:27.50px;background:#f6f7fd;border-radius:4.5px;border:1px solid #e8eaf9;overflow:hidden;"><div class="a" style="left:65.00px;top:-1.00px;width:27.00px;height:28.00px;background:#e8ebfc;"></div></div><svg style="left:1552.00px;top:254.10px;" width="13.1" height="13.5" viewBox="0 0 13.1 13.5"><g fill="none" stroke="#4a50da" stroke-width="1.3"><rect x=".65" y="1.6" width="11.8" height="11.2" rx="1"/><path d="M3.6 0V2.4M9.5 0V2.4"/></g><rect x=".65" y="1.6" width="11.8" height="3.4" fill="#4a50da"/><rect x="7.4" y="8.2" width="3.3" height="3.1" fill="#4a50da"/></svg><div class="a" style="left:1573.20px;top:247.00px;width:28.80px;height:27.50px;background:#e8ebfc;border-radius:4px;"></div><svg style="left:1582.00px;top:255.60px;" width="12" height="12.4" viewBox="0 0 12 12.4"><path d="M0 0H12L7.3 5.6V10.2L4.7 12.4V5.6Z" fill="#4a50da"/></svg><div class="a" style="left:1613.20px;top:247.00px;width:95.00px;height:27.50px;background:#f6f7fd;border-radius:4.5px;border:1px solid #e8eaf9;overflow:hidden;"><div class="a" style="left:68.00px;top:-1.00px;width:27.00px;height:28.00px;background:#e8ebfc;"></div></div><svg style="left:1690.20px;top:254.10px;" width="13.1" height="13.5" viewBox="0 0 13.1 13.5"><g fill="none" stroke="#4a50da" stroke-width="1.3"><rect x=".65" y="1.6" width="11.8" height="11.2" rx="1"/><path d="M3.6 0V2.4M9.5 0V2.4"/></g><rect x=".65" y="1.6" width="11.8" height="3.4" fill="#4a50da"/><rect x="7.4" y="8.2" width="3.3" height="3.1" fill="#4a50da"/></svg><div class="a" style="left:1711.00px;top:247.00px;width:28.80px;height:27.50px;background:#e8ebfc;border-radius:4px;"></div><svg style="left:1719.80px;top:255.60px;" width="12" height="12.4" viewBox="0 0 12 12.4"><path d="M0 0H12L7.3 5.6V10.2L4.7 12.4V5.6Z" fill="#4a50da"/></svg><div class="a" style="left:288.00px;top:280.00px;width:1566.00px;height:1.00px;background:#dde1e6;"></div><div class="a" style="left:0.00px;top:0.00px;width:1872.00px;height:895.00px;overflow:hidden;"><div class="a" style="left:288.00px;top:328.50px;width:1555.00px;height:13.00px;background:linear-gradient(180deg,#eef0fc,rgba(249,249,252,0));"></div><div class="a" style="left:288.00px;top:328.00px;width:1555.00px;height:1.00px;background:#e8eaef;"></div><div class="a" style="left:289.00px;top:281.50px;width:57.50px;height:46.00px;overflow:hidden;"><span id="t53" class="t" style="top:12.35px;font-size:11.3px;line-height:20px;color:#3d41c6;right:1.20px;letter-spacing:.26px;">Software failure - Excel</span></div><div class="hx" style="left:452px;top:294px;width:124px;height:22px;line-height:22.6px;background:#008578;color:#fff;">New</div><div class="hx" style="left:587px;top:294px;width:140px;height:22px;line-height:22.6px;background:#008578;color:#fff;">Medium</div><span id="t54" class="t" style="top:284.85px;font-size:11.3px;line-height:20px;color:#3d41c6;left:875.80px;letter-spacing:0.259px;">Administrator Oxari,</span><span id="t55" class="t" style="top:302.85px;font-size:11.3px;line-height:20px;color:#3d41c6;left:875.80px;letter-spacing:0.309px;">Charlotte White</span><span id="t56" class="t" style="top:293.85px;font-size:11.3px;line-height:20px;color:#3d41c6;left:1010.50px;letter-spacing:0.250px;">Software failure</span><div class="hx hx4" style="left:1208px;top:295px;width:122.5px;height:22px;line-height:23px;padding-right:34px;box-sizing:border-box;background:#e9ebee;color:#f7f8f9;"><svg style="position:relative;top:2px;margin-right:5.6px" width="9.4" height="11.4" viewBox="0 0 9.4 11.4"><path d="M.6 .4L9 5.7L.6 11Z" fill="#fff"/></svg>1h 26m</div><span id="t57" class="t" style="top:293.85px;font-size:11.3px;line-height:20px;color:#3d41c6;left:1477.50px;letter-spacing:0.266px;">6/13/2024 1:35:47 PM</span><div class="a" style="left:288.00px;top:364.00px;width:1555.00px;height:1.00px;background:#e8eaef;"></div><div class="hx" style="left:452px;top:336.0px;width:124px;height:21.4px;line-height:22px;background:#008578;color:#fff;">New</div><span id="t58" class="t" style="top:335.85px;font-size:11.3px;line-height:20px;color:#3c3c3c;left:587.60px;">-</span><span id="t59" class="t" style="top:335.85px;font-size:11.3px;line-height:20px;color:#3c3c3c;left:1010.50px;letter-spacing:0.220px;">Reservation</span><span id="t60" class="t" style="top:335.85px;font-size:11.3px;line-height:20px;color:#3c3c3c;left:1477.50px;letter-spacing:0.357px;">6/13/2024 11:18:06 AM</span><div class="a" style="left:288.00px;top:412.00px;width:1555.00px;height:1.00px;background:#e8eaef;"></div><div class="a" style="left:289.00px;top:365.50px;width:10.00px;height:46.00px;overflow:hidden;"><span id="t61" class="t" style="top:12.35px;font-size:11.3px;line-height:20px;color:#3c3c3c;right:1.20px;letter-spacing:.26px;">Printer failure</span></div><div class="hx" style="left:452px;top:378.0px;width:124px;height:21.4px;line-height:20px;background:#2b32d0;color:#fff;">In progress</div><div class="hx" style="left:587px;top:378.0px;width:140px;height:21.4px;line-height:20px;background:#f0546a;color:#fff;">Critical</div><span id="t62" class="t" style="top:368.85px;font-size:11.3px;line-height:20px;color:#3c3c3c;left:739.00px;letter-spacing:0.356px;">Hardware support</span><span id="t63" class="t" style="top:386.85px;font-size:11.3px;line-height:20px;color:#3c3c3c;left:739.00px;letter-spacing:0.419px;">group</span><span id="t64" class="t" style="top:377.85px;font-size:11.3px;line-height:20px;color:#3c3c3c;left:1010.50px;letter-spacing:0.188px;">Printer failure</span><div class="hx hx4" style="left:1208px;top:379px;width:122.5px;height:22px;line-height:23px;background:#e9ebee;color:#333;text-align:left;"><i style="position:absolute;left:0;top:0;bottom:0;width:1.6px;background:#101ea6"></i><span style="position:absolute;left:9.2px">3h 54m</span></div><div class="hx hx4" style="left:1343px;top:379px;width:122.5px;height:22px;line-height:23px;padding-right:11px;box-sizing:border-box;background:#e9ebee;color:#f7f8f9;"><svg style="position:relative;top:2px;margin-right:5.6px" width="9.4" height="11.4" viewBox="0 0 9.4 11.4"><path d="M.6 .4L9 5.7L.6 11Z" fill="#fff"/></svg>28m</div><span id="t65" class="t" style="top:377.85px;font-size:11.3px;line-height:20px;color:#3c3c3c;left:1477.50px;letter-spacing:0.317px;">6/13/2024 10:32:01 AM</span><div class="a" style="left:288.00px;top:448.00px;width:1555.00px;height:1.00px;background:#e8eaef;"></div><div class="hx" style="left:452px;top:420.0px;width:124px;height:21.4px;line-height:20px;background:#bfcfbf;color:#333;">Closed</div><div class="hx" style="left:587px;top:420.0px;width:140px;height:21.4px;line-height:20px;background:#ffbd59;color:#333;">High</div><span id="t66" class="t" style="top:419.85px;font-size:11.3px;line-height:20px;color:#3c3c3c;left:875.80px;letter-spacing:0.250px;">Emma Johnson</span><span id="t67" class="t" style="top:419.85px;font-size:11.3px;line-height:20px;color:#3c3c3c;left:1010.50px;letter-spacing:0.350px;">Granting permissions/access</span><span id="t68" class="t" style="top:419.85px;font-size:11.3px;line-height:20px;color:#3c3c3c;left:1477.50px;letter-spacing:0.302px;">5/9/2024 7:05:28 AM</span><span id="t69" class="t" style="top:419.85px;font-size:11.3px;line-height:20px;color:#3c3c3c;left:1613.60px;letter-spacing:0.345px;">5/9/2024 7:11:54 AM</span><div class="a" style="left:288.00px;top:496.00px;width:1555.00px;height:1.00px;background:#e8eaef;"></div><div class="a" style="left:289.00px;top:449.50px;width:71.00px;height:46.00px;overflow:hidden;"><span id="t70" class="t" style="top:12.35px;font-size:11.3px;line-height:20px;color:#3c3c3c;right:1.20px;letter-spacing:.26px;">Workstation failure - Laptop</span></div><div class="hx" style="left:452px;top:462.0px;width:124px;height:21.4px;line-height:20px;background:#bfcfbf;color:#333;">Closed</div><div class="hx" style="left:587px;top:462.0px;width:140px;height:21.4px;line-height:20px;background:#f0546a;color:#fff;">Critical</div><span id="t71" class="t" style="top:452.85px;font-size:11.3px;line-height:20px;color:#3c3c3c;left:739.00px;letter-spacing:0.356px;">Hardware support</span><span id="t72" class="t" style="top:470.85px;font-size:11.3px;line-height:20px;color:#3c3c3c;left:739.00px;letter-spacing:0.419px;">group</span><span id="t73" class="t" style="top:461.85px;font-size:11.3px;line-height:20px;color:#3c3c3c;left:875.80px;letter-spacing:0.259px;">Ethan Walker</span><span id="t74" class="t" style="top:461.85px;font-size:11.3px;line-height:20px;color:#3c3c3c;left:1010.50px;letter-spacing:0.298px;">Workstation failure</span><div class="hx hx4" style="left:1208px;top:463px;width:122.5px;height:22px;line-height:23px;background:#e9ebee;color:#333;text-align:left;"><span style="position:absolute;left:9.2px">4h 0m</span></div><div class="hx hx4" style="left:1343px;top:463px;width:122.5px;height:22px;line-height:23px;background:#e9ebee;color:#333;text-align:left;"><span style="position:absolute;left:9.2px">8h 0m</span></div><span id="t75" class="t" style="top:461.85px;font-size:11.3px;line-height:20px;color:#3c3c3c;left:1477.50px;letter-spacing:0.302px;">5/9/2024 6:41:30 AM</span><span id="t76" class="t" style="top:461.85px;font-size:11.3px;line-height:20px;color:#3c3c3c;left:1613.60px;letter-spacing:0.302px;">5/9/2024 6:57:25 AM</span><div class="a" style="left:288.00px;top:532.00px;width:1555.00px;height:1.00px;background:#e8eaef;"></div><div class="hx" style="left:452px;top:504.0px;width:124px;height:21.4px;line-height:20px;background:#008578;color:#fff;">New</div><span id="t77" class="t" style="top:503.85px;font-size:11.3px;line-height:20px;color:#3c3c3c;left:587.60px;">-</span><span id="t78" class="t" style="top:503.85px;font-size:11.3px;line-height:20px;color:#3c3c3c;left:1010.50px;letter-spacing:0.203px;">Problem</span><span id="t79" class="t" style="top:503.85px;font-size:11.3px;line-height:20px;color:#3c3c3c;left:1477.50px;letter-spacing:0.297px;">4/18/2024 9:21:34 AM</span><div class="a" style="left:288.00px;top:570.00px;width:1555.00px;height:1.00px;background:#e8eaef;"></div><div class="a" style="left:289.00px;top:533.50px;width:69.00px;height:36.00px;overflow:hidden;"><span id="t80" class="t" style="top:7.35px;font-size:11.3px;line-height:20px;color:#3c3c3c;right:1.20px;letter-spacing:.26px;">Software failure - Outlook</span></div><div class="hx" style="left:452px;top:541.0px;width:124px;height:21.4px;line-height:20px;background:#008578;color:#fff;">New</div><div class="hx" style="left:587px;top:541.0px;width:140px;height:21.4px;line-height:20px;background:#008578;color:#fff;">Medium</div><span id="t81" class="t" style="top:540.85px;font-size:11.3px;line-height:20px;color:#3c3c3c;left:875.80px;letter-spacing:0.309px;">Charlotte White</span><span id="t82" class="t" style="top:540.85px;font-size:11.3px;line-height:20px;color:#3c3c3c;left:1010.50px;letter-spacing:0.250px;">Software failure</span><div class="hx hx4" style="left:1208px;top:542px;width:122.5px;height:22px;line-height:23px;padding-right:5px;box-sizing:border-box;background:linear-gradient(90deg,#d3282c 0%,#c32126 30%,#8d0c10 72%,#6a0205 100%);color:#fff;"><svg style="position:relative;top:2px;margin-right:5.6px" width="9.4" height="11.4" viewBox="0 0 9.4 11.4"><path d="M.6 .4L9 5.7L.6 11Z" fill="#fff"/></svg>14d 11h 15m</div><span id="t83" class="t" style="top:540.85px;font-size:11.3px;line-height:20px;color:#3c3c3c;left:1477.50px;letter-spacing:0.297px;">4/15/2024 8:53:58 AM</span><div class="a" style="left:288.00px;top:618.00px;width:1555.00px;height:1.00px;background:#e8eaef;"></div><div class="a" style="left:289.00px;top:571.50px;width:71.00px;height:46.00px;overflow:hidden;"><span id="t84" class="t" style="top:12.35px;font-size:11.3px;line-height:20px;color:#3c3c3c;right:1.20px;letter-spacing:.26px;">Workstation failure - Laptop</span></div><div class="hx" style="left:452px;top:583px;width:124px;height:22px;line-height:22px;background:#4147cd;color:#fff;">Resumed</div><div class="hx" style="left:587px;top:583px;width:140px;height:22px;line-height:22px;background:#f0546a;color:#fff;">Critical</div><span id="t85" class="t" style="top:574.85px;font-size:11.3px;line-height:20px;color:#3c3c3c;left:739.00px;letter-spacing:0.356px;">Hardware support</span><span id="t86" class="t" style="top:592.85px;font-size:11.3px;line-height:20px;color:#3c3c3c;left:739.00px;letter-spacing:0.419px;">group</span><span id="t87" class="t" style="top:583.85px;font-size:11.3px;line-height:20px;color:#3c3c3c;left:875.80px;letter-spacing:0.280px;">Administrator Oxari</span><span id="t88" class="t" style="top:583.85px;font-size:11.3px;line-height:20px;color:#3c3c3c;left:1010.50px;letter-spacing:0.298px;">Workstation failure</span><div class="hx hx4" style="left:1208px;top:585px;width:122.5px;height:22px;line-height:23px;background:#e9ebee;color:#333;text-align:left;"><span style="position:absolute;left:9.2px">4h 0m</span></div><div class="hx hx4" style="left:1343px;top:585px;width:122.5px;height:22px;line-height:23px;padding-right:5px;box-sizing:border-box;background:linear-gradient(90deg,#d3282c 0%,#c32126 30%,#8d0c10 72%,#6a0205 100%);color:#fff;"><svg style="position:relative;top:2px;margin-right:5.6px" width="9.4" height="11.4" viewBox="0 0 9.4 11.4"><path d="M.6 .4L9 5.7L.6 11Z" fill="#fff"/></svg>23d 10h 9m</div><span id="t89" class="t" style="top:583.85px;font-size:11.3px;line-height:20px;color:#3c3c3c;left:1477.50px;letter-spacing:0.269px;">3/6/2024 4:23:30 PM</span><div class="a" style="left:288.00px;top:656.00px;width:1555.00px;height:1.00px;background:#e8eaef;"></div><div class="a" style="left:289.00px;top:619.50px;width:56.50px;height:36.00px;overflow:hidden;"><span id="t90" class="t" style="top:7.35px;font-size:11.3px;line-height:20px;color:#3c3c3c;right:1.20px;letter-spacing:.26px;">Software failure - 7-zip</span></div><div class="hx" style="left:452px;top:626px;width:124px;height:22px;line-height:22px;background:#008578;color:#fff;">New</div><div class="hx" style="left:587px;top:626px;width:140px;height:22px;line-height:22px;background:#008578;color:#fff;">Medium</div><span id="t91" class="t" style="top:626.85px;font-size:11.3px;line-height:20px;color:#3c3c3c;left:875.80px;letter-spacing:0.309px;">Charlotte White</span><span id="t92" class="t" style="top:626.85px;font-size:11.3px;line-height:20px;color:#3c3c3c;left:1010.50px;letter-spacing:0.250px;">Software failure</span><div class="hx hx4" style="left:1208px;top:628px;width:122.5px;height:22px;line-height:23px;padding-right:5px;box-sizing:border-box;background:linear-gradient(90deg,#d3282c 0%,#c32126 30%,#8d0c10 72%,#6a0205 100%);color:#fff;"><svg style="position:relative;top:2px;margin-right:5.6px" width="9.4" height="11.4" viewBox="0 0 9.4 11.4"><path d="M.6 .4L9 5.7L.6 11Z" fill="#fff"/></svg>28d 10h 9m</div><span id="t93" class="t" style="top:626.85px;font-size:11.3px;line-height:20px;color:#3c3c3c;left:1477.50px;letter-spacing:0.297px;">2/15/2024 9:59:15 AM</span><div class="a" style="left:288.00px;top:704.00px;width:1555.00px;height:1.00px;background:#e8eaef;"></div><div class="a" style="left:289.00px;top:657.50px;width:71.00px;height:46.00px;overflow:hidden;"><span id="t94" class="t" style="top:11.45px;font-size:11.3px;line-height:20px;color:#3c3c3c;right:1.20px;letter-spacing:.26px;">Workstation failure - Laptop</span></div><div class="hx" style="left:452px;top:669px;width:124px;height:22px;line-height:22px;background:#008578;color:#fff;">New</div><div class="hx" style="left:587px;top:669px;width:140px;height:22px;line-height:22px;background:#f0546a;color:#fff;">Critical</div><span id="t95" class="t" style="top:659.95px;font-size:11.3px;line-height:20px;color:#3c3c3c;left:739.00px;letter-spacing:0.356px;">Hardware support</span><span id="t96" class="t" style="top:677.95px;font-size:11.3px;line-height:20px;color:#3c3c3c;left:739.00px;letter-spacing:0.419px;">group</span><span id="t97" class="t" style="top:668.95px;font-size:11.3px;line-height:20px;color:#3c3c3c;left:1010.50px;letter-spacing:0.298px;">Workstation failure</span><div class="hx hx4" style="left:1208px;top:671px;width:122.5px;height:22px;line-height:23px;padding-right:5px;box-sizing:border-box;background:linear-gradient(90deg,#d3282c 0%,#c32126 30%,#8d0c10 72%,#6a0205 100%);color:#fff;"><svg style="position:relative;top:2px;margin-right:5.6px" width="9.4" height="11.4" viewBox="0 0 9.4 11.4"><path d="M.6 .4L9 5.7L.6 11Z" fill="#fff"/></svg>28d 12h 10m</div><span id="t98" class="t" style="top:668.95px;font-size:11.3px;line-height:20px;color:#3c3c3c;left:1477.50px;letter-spacing:0.297px;">2/15/2024 9:58:30 AM</span><div class="a" style="left:288.00px;top:751.00px;width:1555.00px;height:1.00px;background:#e8eaef;"></div><div class="a" style="left:289.00px;top:705.50px;width:74.50px;height:45.00px;overflow:hidden;"><span id="t99" class="t" style="top:11.85px;font-size:11.3px;line-height:20px;color:#3c3c3c;right:1.20px;letter-spacing:.26px;">Workstation failure - Monitor</span></div><div class="hx" style="left:452px;top:717px;width:124px;height:22px;line-height:22px;background:#2b32d0;color:#fff;">In progress</div><div class="hx" style="left:587px;top:717px;width:140px;height:22px;line-height:22px;background:#ffbd59;color:#333;">High</div><span id="t100" class="t" style="top:708.35px;font-size:11.3px;line-height:20px;color:#3c3c3c;left:739.00px;letter-spacing:0.356px;">Hardware support</span><span id="t101" class="t" style="top:726.35px;font-size:11.3px;line-height:20px;color:#3c3c3c;left:739.00px;letter-spacing:0.419px;">group</span><span id="t102" class="t" style="top:717.35px;font-size:11.3px;line-height:20px;color:#3c3c3c;left:1010.50px;letter-spacing:0.298px;">Workstation failure</span><div class="hx hx4" style="left:1208px;top:718px;width:122.5px;height:22px;line-height:23px;background:#e9ebee;color:#333;text-align:left;"><i style="position:absolute;left:0;top:0;bottom:0;width:5.8px;background:#101ea6"></i><span style="position:absolute;left:9.2px">3h 48m</span></div><div class="hx hx4" style="left:1343px;top:718px;width:122.5px;height:22px;line-height:23px;padding-right:5px;box-sizing:border-box;background:linear-gradient(90deg,#d3282c 0%,#c32126 30%,#8d0c10 72%,#6a0205 100%);color:#fff;"><svg style="position:relative;top:2px;margin-right:5.6px" width="9.4" height="11.4" viewBox="0 0 9.4 11.4"><path d="M.6 .4L9 5.7L.6 11Z" fill="#fff"/></svg>28d 7h 59m</div><span id="t103" class="t" style="top:717.35px;font-size:11.3px;line-height:20px;color:#3c3c3c;left:1477.50px;letter-spacing:0.297px;">2/15/2024 9:57:56 AM</span><div class="a" style="left:288.00px;top:790.00px;width:1555.00px;height:1.00px;background:#e8eaef;"></div><div class="a" style="left:289.00px;top:752.50px;width:57.50px;height:37.00px;overflow:hidden;"><span id="t104" class="t" style="top:7.85px;font-size:11.3px;line-height:20px;color:#3c3c3c;right:1.20px;letter-spacing:.26px;">Software failure - Excel</span></div><div class="hx" style="left:452px;top:760px;width:124px;height:22px;line-height:22px;background:#bfcfbf;color:#333;">Closed</div><div class="hx" style="left:587px;top:760px;width:140px;height:22px;line-height:22px;background:#bfcfbf;color:#333;">Low</div><span id="t105" class="t" style="top:760.35px;font-size:11.3px;line-height:20px;color:#3c3c3c;left:875.80px;letter-spacing:0.309px;">Charlotte White</span><span id="t106" class="t" style="top:760.35px;font-size:11.3px;line-height:20px;color:#3c3c3c;left:1010.50px;letter-spacing:0.250px;">Software failure</span><div class="hx hx4" style="left:1208px;top:761px;width:122.5px;height:22px;line-height:23px;padding-right:5px;box-sizing:border-box;background:linear-gradient(90deg,#d3282c 0%,#c32126 30%,#8d0c10 72%,#6a0205 100%);color:#fff;"><svg style="position:relative;top:2px;margin-right:5.6px" width="9.4" height="11.4" viewBox="0 0 9.4 11.4"><path d="M.6 .4L9 5.7L.6 11Z" fill="#fff"/></svg>28d 10h 11m</div><span id="t107" class="t" style="top:760.35px;font-size:11.3px;line-height:20px;color:#3c3c3c;left:1477.50px;letter-spacing:0.297px;">2/15/2024 9:57:15 AM</span><span id="t108" class="t" style="top:760.35px;font-size:11.3px;line-height:20px;color:#3c3c3c;left:1613.60px;letter-spacing:0.297px;">4/17/2024 9:19:04 AM</span><div class="a" style="left:288.00px;top:828.00px;width:1555.00px;height:1.00px;background:#e8eaef;"></div><div class="a" style="left:289.00px;top:791.50px;width:58.50px;height:36.00px;overflow:hidden;"><span id="t109" class="t" style="top:6.45px;font-size:11.3px;line-height:20px;color:#3c3c3c;right:1.20px;letter-spacing:.26px;">Software failure - Word</span></div><div class="hx" style="left:452px;top:798px;width:124px;height:22px;line-height:22px;background:#2b32d0;color:#fff;">In progress</div><div class="hx" style="left:587px;top:798px;width:140px;height:22px;line-height:22px;background:#008578;color:#fff;">Medium</div><span id="t110" class="t" style="top:797.95px;font-size:11.3px;line-height:20px;color:#3c3c3c;left:875.80px;letter-spacing:0.309px;">Charlotte White</span><span id="t111" class="t" style="top:797.95px;font-size:11.3px;line-height:20px;color:#3c3c3c;left:1010.50px;letter-spacing:0.250px;">Software failure</span><div class="hx hx4" style="left:1208px;top:800px;width:122.5px;height:22px;line-height:23px;background:#e9ebee;color:#333;text-align:left;"><i style="position:absolute;left:0;top:0;bottom:0;width:2.6px;background:#101ea6"></i><span style="position:absolute;left:9.2px">5h 49m</span></div><div class="hx hx4" style="left:1343px;top:800px;width:122.5px;height:22px;line-height:23px;padding-right:5px;box-sizing:border-box;background:linear-gradient(90deg,#d3282c 0%,#c32126 30%,#8d0c10 72%,#6a0205 100%);color:#fff;"><svg style="position:relative;top:2px;margin-right:5.6px" width="9.4" height="11.4" viewBox="0 0 9.4 11.4"><path d="M.6 .4L9 5.7L.6 11Z" fill="#fff"/></svg>28d 4h 1m</div><span id="t112" class="t" style="top:797.95px;font-size:11.3px;line-height:20px;color:#3c3c3c;left:1477.50px;letter-spacing:0.297px;">2/15/2024 9:56:26 AM</span><div class="a" style="left:288.00px;top:866.00px;width:1555.00px;height:1.00px;background:#e8eaef;"></div><div class="a" style="left:289.00px;top:829.50px;width:59.50px;height:36.00px;overflow:hidden;"><span id="t113" class="t" style="top:6.45px;font-size:11.3px;line-height:20px;color:#3c3c3c;right:1.20px;letter-spacing:.26px;">Software failure - Other</span></div><div class="hx" style="left:452px;top:836px;width:124px;height:22px;line-height:22px;background:#008578;color:#fff;">New</div><div class="hx" style="left:587px;top:836px;width:140px;height:22px;line-height:22px;background:#ffbd59;color:#333;">High</div><span id="t114" class="t" style="top:835.95px;font-size:11.3px;line-height:20px;color:#3c3c3c;left:875.80px;letter-spacing:0.309px;">Charlotte White</span><span id="t115" class="t" style="top:835.95px;font-size:11.3px;line-height:20px;color:#3c3c3c;left:1010.50px;letter-spacing:0.250px;">Software failure</span><div class="hx hx4" style="left:1208px;top:838px;width:122.5px;height:22px;line-height:23px;padding-right:5px;box-sizing:border-box;background:linear-gradient(90deg,#d3282c 0%,#c32126 30%,#8d0c10 72%,#6a0205 100%);color:#fff;"><svg style="position:relative;top:2px;margin-right:5.6px" width="9.4" height="11.4" viewBox="0 0 9.4 11.4"><path d="M.6 .4L9 5.7L.6 11Z" fill="#fff"/></svg>28d 10h 13m</div><span id="t116" class="t" style="top:835.95px;font-size:11.3px;line-height:20px;color:#3c3c3c;left:1477.50px;letter-spacing:0.297px;">2/15/2024 9:55:40 AM</span><div class="a" style="left:289.00px;top:867.50px;width:123.00px;height:36.50px;overflow:hidden;"><span id="t117" class="t" style="top:7.60px;font-size:11.3px;line-height:20px;color:#3c3c3c;right:1.20px;letter-spacing:.26px;">Software failure - Total Commander</span></div><div class="hx" style="left:452px;top:874px;width:124px;height:22px;line-height:22px;background:#c0c0c0;color:#333;">On hold</div><div class="hx" style="left:587px;top:874px;width:140px;height:22px;line-height:22px;background:#bfcfbf;color:#333;">Low</div><span id="t118" class="t" style="top:875.10px;font-size:11.3px;line-height:20px;color:#3c3c3c;left:875.80px;letter-spacing:0.309px;">Charlotte White</span><span id="t119" class="t" style="top:875.10px;font-size:11.3px;line-height:20px;color:#3c3c3c;left:1010.50px;letter-spacing:0.250px;">Software failure</span><div class="hx hx4" style="left:1208px;top:876px;width:122.5px;height:22px;line-height:23px;background:#e9ebee;color:#333;text-align:left;"><i style="position:absolute;left:0;top:0;bottom:0;width:4px;background:#101ea6"></i><span style="position:absolute;left:9.2px">5h 45m</span></div><span id="t120" class="t" style="top:875.10px;font-size:11.3px;line-height:20px;color:#3c3c3c;left:1477.50px;letter-spacing:0.297px;">2/15/2024 9:54:17 AM</span></div><div class="a" style="left:1751.30px;top:293.00px;width:26.50px;height:23.00px;background:#e3e6fb;clip-path:polygon(0 50%,25% 0,75% 0,100% 50%,75% 100%,25% 100%);"></div><div class="a" style="left:1780.70px;top:293.00px;width:26.50px;height:23.00px;background:#e3e6fb;clip-path:polygon(0 50%,25% 0,75% 0,100% 50%,75% 100%,25% 100%);"></div><div class="a" style="left:1810.00px;top:293.00px;width:26.50px;height:23.00px;background:#e3e6fb;clip-path:polygon(0 50%,25% 0,75% 0,100% 50%,75% 100%,25% 100%);"></div><svg style="left:1757.60px;top:299.60px;" width="14" height="10" viewBox="0 0 14 10"><path d="M0 5C1.6 2 4 .3 7 .3S12.4 2 14 5C12.4 8 10 9.7 7 9.7S1.6 8 0 5Z" fill="#a3a8ee"/><circle cx="7" cy="5" r="3.4" fill="#eceefe"/><circle cx="7.3" cy="5" r="2.4" fill="#4a50da"/><circle cx="6.3" cy="4.1" r=".9" fill="#eceefe"/></svg><svg style="left:1788.20px;top:298.40px;" width="12" height="12" viewBox="0 0 12 12"><g fill="none" stroke="#3d41c6" stroke-width="1.25" stroke-linejoin="round" stroke-linecap="round"><path d="M5.4 1.6H2.2A1.4 1.4 0 0 0 .8 3V9.8A1.4 1.4 0 0 0 2.2 11.2H9A1.4 1.4 0 0 0 10.4 9.8V6.6"/><path d="M9.4 .9L11.1 2.6L6.2 7.5L4.2 7.9L4.6 5.8Z"/></g></svg><svg style="left:1818.00px;top:298.40px;" width="10.6" height="12.4" viewBox="0 0 10.6 12.4"><g fill="none" stroke="#3d41c6" stroke-width="1.2"><path d="M0 2.8H10.6M3.4 2.6V1.2A.6 .6 0 0 1 4 .6H6.6A.6 .6 0 0 1 7.2 1.2V2.6M1.4 3V10.6A1.2 1.2 0 0 0 2.6 11.8H8A1.2 1.2 0 0 0 9.2 10.6V3"/><path d="M3.6 5.2V9.6M5.3 5.2V9.6M7 5.2V9.6" stroke-width=".7"/></g></svg><div class="a" style="left:1843.00px;top:281.00px;width:10.50px;height:614.00px;background:#e8ebfc;"></div><svg style="left:1845.00px;top:287.00px;" width="6.4" height="3.6" viewBox="0 0 6.4 3.6"><path d="M0 3.6L3.2 0L6.4 3.6Z" fill="#b9bdcc"/></svg><div class="a" style="left:1845.00px;top:296.00px;width:6.00px;height:224.00px;background:#b8bccb;border-radius:3px;"></div><svg style="left:1845.00px;top:885.60px;" width="6.4" height="3.6" viewBox="0 0 6.4 3.6"><path d="M0 0L3.2 3.6L6.4 0Z" fill="#b9bdcc"/></svg><div class="a" style="left:288.00px;top:895.00px;width:1566.00px;height:10.50px;background:#e8ebfc;"></div><svg style="left:293.60px;top:897.40px;" width="3.8" height="6" viewBox="0 0 3.8 6"><path d="M3.8 0V6L0 3Z" fill="#b9bdcc"/></svg><svg style="left:1834.00px;top:897.40px;" width="3.8" height="6" viewBox="0 0 3.8 6"><path d="M0 0V6L3.8 3Z" fill="#b9bdcc"/></svg><div class="a" style="left:730.00px;top:897.30px;width:1098.00px;height:5.60px;background:#b8bccb;border-radius:3px;"></div><div class="a" style="left:288.00px;top:905.50px;width:1566.00px;height:1.00px;background:#e6e8f2;"></div><svg style="left:304.80px;top:922.00px;" width="7.6" height="7.6" viewBox="0 0 7.6 7.6"><path d="M.7 0V7.6" stroke="#555" stroke-width="1.4"/><path d="M7.6 0V7.6L2.2 3.8Z" fill="#555"/></svg><svg style="left:334.40px;top:922.00px;" width="5.6" height="7.6" viewBox="0 0 5.6 7.6"><path d="M5.6 0V7.6L0 3.8Z" fill="#555"/></svg><div class="a" style="left:351.00px;top:912.00px;width:27.80px;height:27.80px;background:#cdd0f4;"></div><span id="t121" class="t" style="top:915.85px;font-size:11.3px;line-height:20px;color:#3d41c6;left:362.00px;">1</span><svg style="left:390.00px;top:922.00px;" width="5.6" height="7.6" viewBox="0 0 5.6 7.6"><path d="M0 0V7.6L5.6 3.8Z" fill="#555"/></svg><svg style="left:416.00px;top:922.00px;" width="7.6" height="7.6" viewBox="0 0 7.6 7.6"><path d="M6.9 0V7.6" stroke="#555" stroke-width="1.4"/><path d="M0 0V7.6L5.4 3.8Z" fill="#555"/></svg><span id="t122" class="t" style="top:915.45px;font-size:11.3px;line-height:20px;color:#3c3c3c;left:446.30px;letter-spacing:0.102px;">Page</span><div class="a" style="left:479.20px;top:912.00px;width:58.40px;height:27.60px;background:#f6f7fd;border-radius:4.5px;border:1px solid #e2e5f8;"></div><span id="t123" class="t" style="top:915.45px;font-size:11.3px;line-height:20px;color:#3c3c3c;left:490.60px;">1</span><span id="t124" class="t" style="top:915.45px;font-size:11.3px;line-height:20px;color:#3c3c3c;left:544.80px;letter-spacing:-0.336px;">of 1</span><div class="a" style="left:575.50px;top:912.00px;width:57.00px;height:27.60px;background:#f6f7fd;border-radius:4.5px;border:1px solid #e2e5f8;overflow:hidden;"><div class="a" style="left:31.50px;top:-1.00px;width:26.00px;height:28.00px;background:#e8ebfc;"></div></div><span id="t125" class="t" style="top:915.45px;font-size:11.3px;line-height:20px;color:#3c3c3c;left:585.60px;letter-spacing:0.211px;">10</span><svg style="left:616.80px;top:923.40px;" width="8.4" height="5.4" viewBox="0 0 8.4 5.4"><path d="M0 0H8.4L4.2 5.4Z" fill="#2b32d0"/></svg><span id="t126" class="t" style="top:915.45px;font-size:11.3px;line-height:20px;color:#3c3c3c;left:639.80px;letter-spacing:0.248px;">items per page</span><span id="t127" class="t" style="top:915.45px;font-size:11.3px;line-height:20px;color:#3c3c3c;left:1722.30px;letter-spacing:0.040px;">1 - 38 of 38 items</span><svg style="left:1827.40px;top:918.80px;" width="13.4" height="14.2" viewBox="0 0 13.4 14.2"><path d="M11 5.4A5.3 5.3 0 1 0 11.9 8.8" fill="none" stroke="#1c1c1c" stroke-width="1.8"/><path d="M6.2 0L10.6 3.1L6.6 6.2Z" fill="#1c1c1c"/></svg><svg style="left:0.00px;top:0.00px;pointer-events:none;" width="1872" height="966" viewBox="0 0 1872 966"><defs><filter id="ds" x="-20%" y="-20%" width="150%" height="150%"><feGaussianBlur in="SourceAlpha" stdDeviation="1.6"/><feOffset dx="2.2" dy="2.6"/><feComponentTransfer><feFuncA type="linear" slope=".38"/></feComponentTransfer><feMerge><feMergeNode/><feMergeNode in="SourceGraphic"/></feMerge></filter></defs>
<path filter="url(#ds)" d="M1762.1 309.8L1734.5 317.9L1740.6 320.8L1673.3 385.4L1748.7 330.3L1750 335.4Z" fill="#8fd43c"/></svg><div class="a" style="left:1773.00px;top:324.00px;width:50.00px;height:23.00px;background:#444;box-shadow:0 0 0 1px #f4f4f6;"></div><span id="t128" class="t" style="top:326.50px;font-size:13px;line-height:20px;color:#fff;left:1779.90px;letter-spacing:-0.536px;">Details</span>
</div></body></html>
